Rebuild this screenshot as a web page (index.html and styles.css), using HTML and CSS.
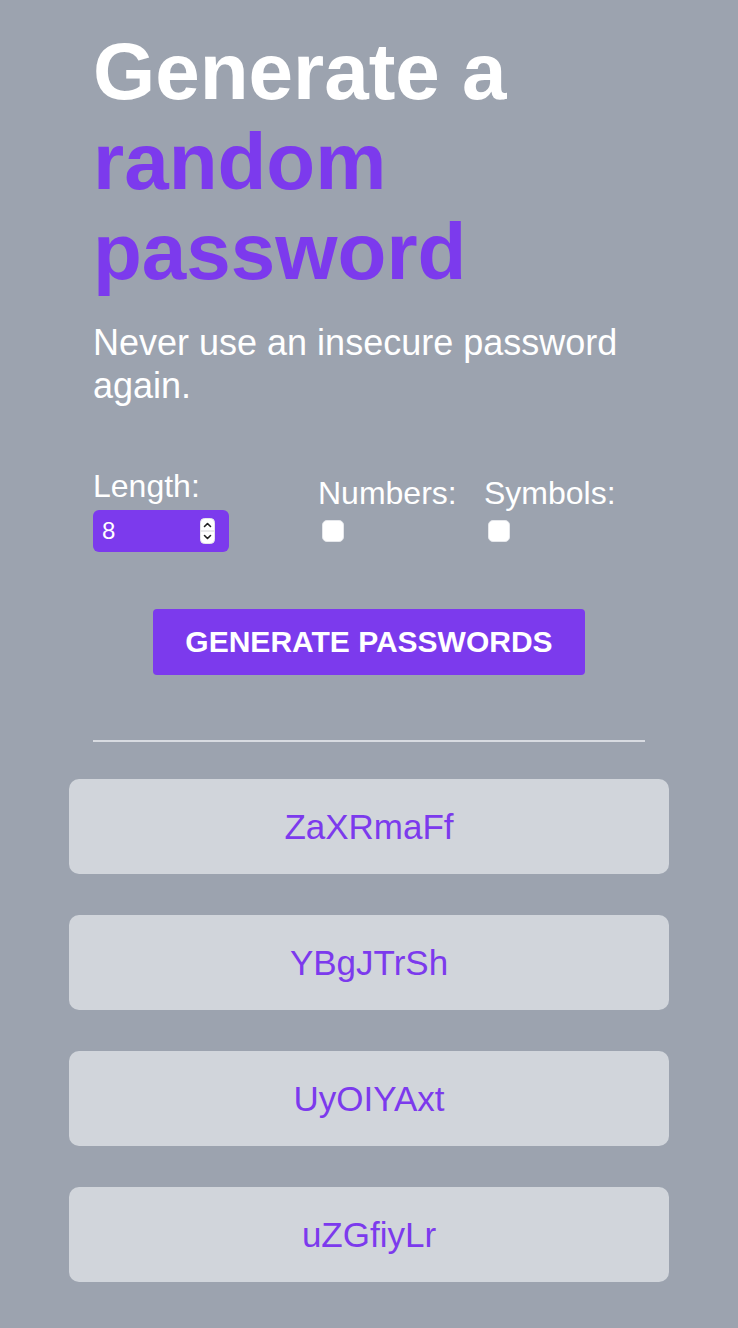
FILE: index.html
```html
<!DOCTYPE html>
<html lang="en">
<head>
<meta charset="utf-8">
<title>Password Generator</title>
<link rel="stylesheet" href="styles.css">
</head>
<body>
<main class="app">
  <section class="intro">
    <h1 class="title">Generate a <span class="accent">random password</span></h1>
    <p class="subtitle">Never use an insecure password again.</p>
  </section>

  <form class="options">
    <div class="field field-length">
      <label class="field-label" for="length">Length:</label>
      <div class="number-wrap">
        <input class="number-input" id="length" type="number" value="8" min="4" max="32">
        <span class="spinner" aria-hidden="true">
          <svg width="15" height="26" viewBox="0 0 15 26">
            <rect x="0.5" y="0.5" width="14" height="25" rx="4" fill="#ffffff" stroke="#e5e5ea"/>
            <line x1="1" y1="13" x2="14" y2="13" stroke="#d4d4d8" stroke-width="1"/>
            <path d="M4.5 8.5 L7.5 5.5 L10.5 8.5" fill="none" stroke="#222" stroke-width="1.6" stroke-linecap="round" stroke-linejoin="round"/>
            <path d="M4.5 17.5 L7.5 20.5 L10.5 17.5" fill="none" stroke="#222" stroke-width="1.6" stroke-linecap="round" stroke-linejoin="round"/>
          </svg>
        </span>
      </div>
    </div>
    <div class="field">
      <label class="field-label" for="numbers">Numbers:</label>
      <input class="check" id="numbers" type="checkbox">
    </div>
    <div class="field">
      <label class="field-label" for="symbols">Symbols:</label>
      <input class="check" id="symbols" type="checkbox">
    </div>
  </form>

  <div class="actions">
    <button class="generate" type="button">Generate passwords</button>
  </div>

  <hr class="divider">

  <ul class="results">
    <li class="result">ZaXRmaFf</li>
    <li class="result">YBgJTrSh</li>
    <li class="result">UyOIYAxt</li>
    <li class="result">uZGfiyLr</li>
  </ul>
</main>
</body>
</html>
```

FILE: styles.css
```css
html, body {
  margin: 0;
  padding: 0;
  background: #9ca3af;
}

body {
  font-family: "Liberation Sans", Arial, Helvetica, sans-serif;
  color: #ffffff;
  min-height: 1328px;
}

.app {
  width: 600px;
  margin: 0 auto;
  padding-top: 27px;
}

.intro,
.options,
.actions {
  padding: 0 24px;
}

.title {
  margin: 0;
  font-size: 80px;
  line-height: 90px;
  font-weight: 700;
  color: #ffffff;
}

.accent {
  color: #7c3aed;
}

.subtitle {
  margin: 24px 0 0;
  font-size: 36px;
  line-height: 43px;
  color: #ffffff;
}

.options {
  margin: 61px 0 0;
  display: grid;
  grid-template-columns: 225px 166px auto;
  align-items: center;
}

.field {
  display: flex;
  flex-direction: column;
  align-items: flex-start;
  gap: 5px;
}

.field-label {
  font-size: 32px;
  line-height: 37px;
  color: #ffffff;
}

.number-wrap {
  position: relative;
  width: 136px;
  height: 42px;
}

.number-input {
  box-sizing: border-box;
  width: 136px;
  height: 42px;
  margin: 0;
  padding: 0 0 0 9px;
  border: none;
  border-radius: 6px;
  background: #7c3aed;
  color: #ffffff;
  font-family: "Liberation Sans", Arial, sans-serif;
  font-size: 24px;
  outline: none;
  -moz-appearance: textfield;
  appearance: textfield;
}

.number-input::-webkit-inner-spin-button,
.number-input::-webkit-outer-spin-button {
  -webkit-appearance: none;
  margin: 0;
}

.spinner {
  position: absolute;
  right: 14px;
  top: 8px;
  width: 15px;
  height: 26px;
  display: block;
  line-height: 0;
}

.check {
  -webkit-appearance: none;
  appearance: none;
  width: 22px;
  height: 22px;
  margin: 3px 0 3px 4px;
  background: #ffffff;
  border: 1px solid #e5e7eb;
  border-radius: 5px;
  box-sizing: border-box;
}

.actions {
  margin-top: 57px;
  display: flex;
  justify-content: center;
}

.generate {
  width: 432px;
  height: 66px;
  border: none;
  border-radius: 4px;
  background: #7c3aed;
  color: #ffffff;
  font-family: "Liberation Sans", Arial, sans-serif;
  font-size: 30px;
  font-weight: 700;
  text-transform: uppercase;
  cursor: pointer;
}

.divider {
  margin: 65px 24px 0;
  height: 0;
  border: none;
  border-top: 2px solid #d8dbe1;
}

.results {
  list-style: none;
  margin: 37px 0 0;
  padding: 0;
  display: flex;
  flex-direction: column;
  gap: 41px;
}

.result {
  height: 95px;
  border-radius: 10px;
  background: #d1d5db;
  color: #7c3aed;
  font-size: 35px;
  display: flex;
  align-items: center;
  justify-content: center;
}
```
